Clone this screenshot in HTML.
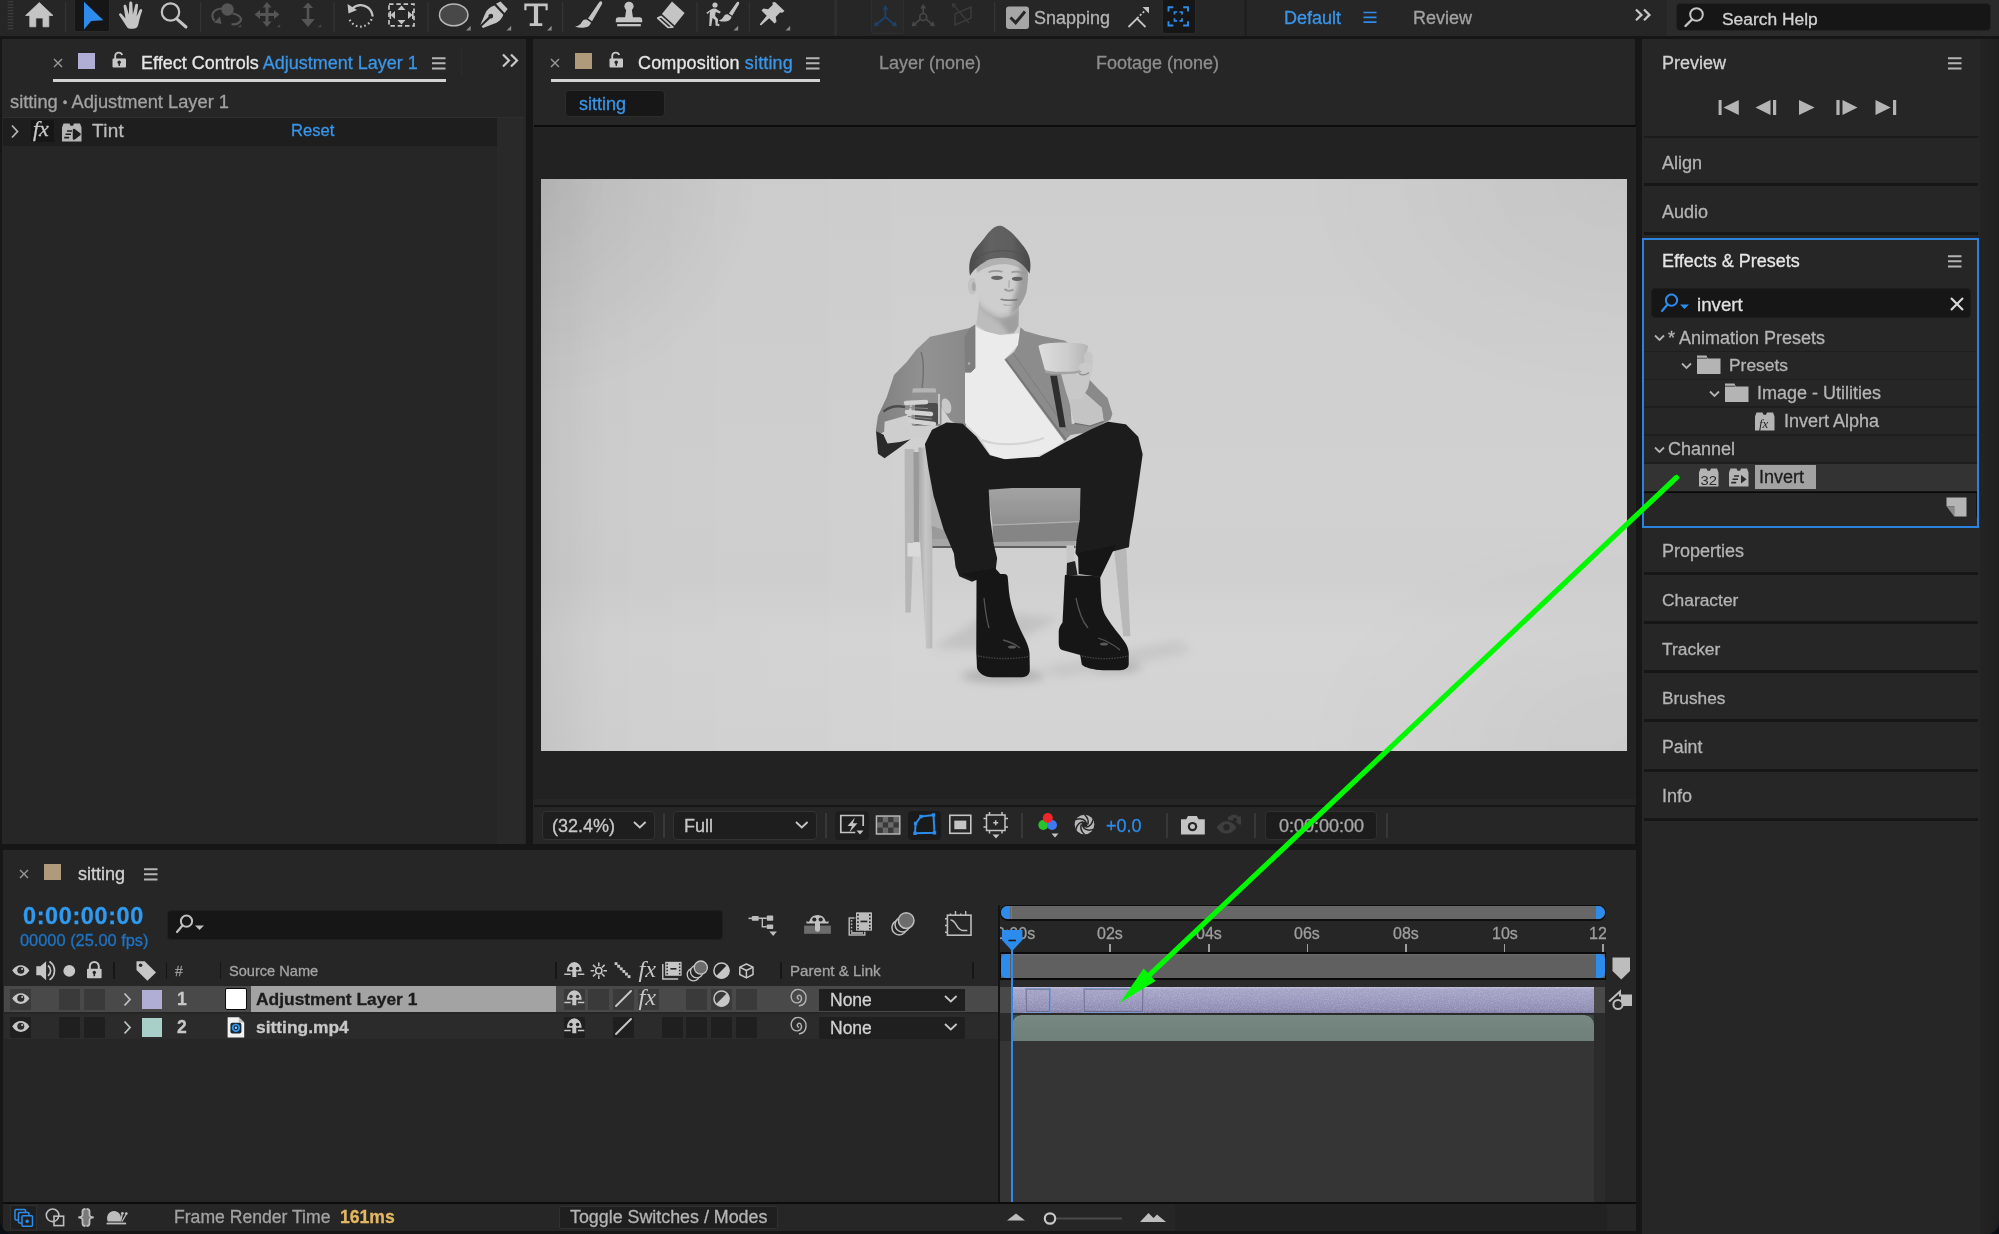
<!DOCTYPE html>
<html>
<head>
<meta charset="utf-8">
<title>After Effects</title>
<style>
*{box-sizing:border-box;margin:0;padding:0}
html,body{width:1999px;height:1234px;overflow:hidden;background:#161616;font-family:"Liberation Sans",sans-serif;}
body{position:relative;color:#b4b4b4;font-size:18px;}
.a{position:absolute;}
.t{-webkit-text-stroke:0.3px currentColor;will-change:transform;position:absolute;white-space:nowrap;line-height:24px;height:24px;font-size:18px;color:#b4b4b4;}
.pn{position:absolute;background:#262626;}
.blue{color:#3a96e8;}
.hl{position:absolute;background:#161616;height:3px;}
svg{position:absolute;overflow:visible;}
.vsep{position:absolute;width:2px;background:#383838;}
</style>
</head>
<body>

<!-- ============ TOP TOOLBAR ============ -->
<div class="pn" id="toolbar" style="left:0;top:0;width:1999px;height:36px;"></div>
<div class="a" style="left:1667px;top:0;width:332px;height:36px;background:#2b2b2b;"></div>
<!--TB-START-->
<div class="a" style="left:73.5px;top:0;width:36.3px;height:32.3px;background:#161616;border-radius:0 0 3px 3px;border:1px solid #2a2a2a;border-top:none;"></div>
<div class="a" style="left:1161.5px;top:0;width:34.5px;height:33.8px;background:#161616;border-radius:0 0 3px 3px;border:1px solid #2a2a2a;border-top:none;"></div>
<div class="a" style="left:870.5px;top:0;width:33.5px;height:33.5px;background:#282828;border-radius:0 0 3px 3px;border:1px solid #2e2e2e;border-top:none;"></div>
<div class="a" style="left:1676px;top:3px;width:315px;height:28px;background:#161616;border-radius:4px;border:1px solid #232323;"></div>
<svg style="left:0;top:0" width="1999" height="40" viewBox="0 0 1999 40">
<!-- grip -->
<g fill="#3c3c3c"><rect x="7.600" y="1" width="5.700" height="1.300"/><rect x="7.600" y="4" width="5.700" height="1.300"/><rect x="7.600" y="7" width="5.700" height="1.300"/><rect x="7.600" y="10" width="5.700" height="1.300"/><rect x="7.600" y="13" width="5.700" height="1.300"/><rect x="7.600" y="16" width="5.700" height="1.300"/><rect x="7.600" y="19" width="5.700" height="1.300"/><rect x="7.600" y="22" width="5.700" height="1.300"/><rect x="7.600" y="25" width="5.700" height="1.300"/><rect x="7.600" y="28" width="5.700" height="1.300"/></g>
<!-- home -->
<path d="M39.300 2.600L53 15.500H48.800V26.800H43V18H35.800V26.800H29.800V15.500H25.600z" fill="#c4c4c4" stroke="#c4c4c4" stroke-width="0.800" stroke-linejoin="round"/>
<g fill="#343434"><rect x="65" y="2" width="1.200" height="30"/><rect x="200" y="2" width="1.200" height="30"/><rect x="333.500" y="2" width="1.200" height="30"/><rect x="427.500" y="2" width="1.200" height="30"/><rect x="562" y="2" width="1.200" height="30"/><rect x="696.300" y="2" width="1.200" height="30"/><rect x="748.700" y="2" width="1.200" height="30"/><rect x="994" y="2" width="1.200" height="30"/></g>
<rect x="834.500" y="0" width="2.400" height="35.500" fill="#303030"/>
<rect x="1244.800" y="0" width="1.600" height="35.500" fill="#1c1c1c"/>
<!-- selection arrow -->
<path d="M84 1.800L103.400 20.300L91.200 21L84 29.500z" fill="#2d8ceb"/>
<!-- hand -->
<g fill="#c4c4c4"><path d="M127.500 27.800c-2.500-3.500-5.300-8.300-8.300-12.600c-.8-1.600 1.200-2.700 2.500-1.200l3.800 4.400l-1.900-11.900c-.3-2 2.300-2.400 2.800-.5l2.500 8.800l.3-11.600c.1-2.100 3-2.100 3.100 0l.6 11.400l2.300-9.700c.5-2 3.200-1.400 2.900.6l-1.500 10.800l3-6.400c.9-1.800 3.200-.7 2.500 1.100c-1.600 4.600-2.800 8.600-3.600 12.700c-.5 2.600-1.700 4.300-3.700 4.700c-3.300.6-6 .6-7.300-.6z"/></g>
<!-- zoom -->
<circle cx="170.500" cy="12" r="8.700" fill="none" stroke="#c4c4c4" stroke-width="2.200"/><path d="M177 19.200L186 27" stroke="#c4c4c4" stroke-width="3" stroke-linecap="round"/>
<!-- orbit (dim) -->
<g fill="#555" stroke="none"><circle cx="227.500" cy="9.500" r="6.200"/><path d="M214 22.500l7.500 1.500-1.500-7.500z"/><path d="M237.500 27.200l3.700-2.800 0 2.800z" fill="#4a4a4a"/></g>
<path d="M222 8.500c-8 .5-12.500 5.500-7.500 12.500M232.500 13.500c8 1.500 11 6 6 9.500c-2 1.200-5 1.500-7 1.200" fill="none" stroke="#555" stroke-width="2.200"/>
<!-- pan (dim) -->
<g fill="#555"><path d="M267 2l4.500 5.500h-3v5.500h5.500v-3l5.500 4.500l-5.500 4.500v-3h-5.500v5.500h3l-4.500 5.500l-4.500-5.500h3v-5.500h-5.500v3l-5.500-4.500l5.500-4.500v3h5.500v-5.500h-3z"/><path d="M276.500 27.200l3.700-2.800 0 2.800z" fill="#4a4a4a"/></g>
<!-- dolly (dim) -->
<g fill="#555"><path d="M308 2.500l5 5.500h-3.700v11h5.500l-6.800 8l-6.800-8h5.500v-11h-3.700z"/><rect x="301" y="6.500" width="14" height="0" /><path d="M317.500 27.200l3.700-2.800 0 2.800z" fill="#4a4a4a"/></g>
<!-- rotate -->
<path d="M352.500 8.500A12 12 0 0 1 372.500 15" fill="none" stroke="#c4c4c4" stroke-width="2.200"/><path d="M347.500 4l1 9.500l8.500-3.500z" fill="#c4c4c4"/>
<path d="M372.500 15a12 12 0 0 1-23.500 3" fill="none" stroke="#c4c4c4" stroke-width="2.200" stroke-dasharray="1.600 2.700"/>
<!-- pan behind -->
<rect x="389" y="4.200" width="25" height="21.600" fill="none" stroke="#c4c4c4" stroke-width="1.700" stroke-dasharray="4.500 2.800"/>
<g fill="#c4c4c4"><path d="M401.500 5.500l4 4.500h-8z"/><path d="M401.500 24.500l4-4.500h-8z"/><path d="M390.500 15l4.500-4v8z"/><path d="M412.500 15l-4.500-4v8z"/><rect x="389.500" y="11" width="1.600" height="8"/><rect x="412" y="11" width="1.600" height="8"/></g>
<!-- ellipse -->
<ellipse cx="453.700" cy="14.900" rx="14.200" ry="10.900" fill="#484848" stroke="#b8b8b8" stroke-width="1.500"/><path d="M466 30.500l4.700-4.700v4.700z" fill="#8a8a8a"/>
<!-- pen -->
<g fill="#c4c4c4"><path d="M496 3.800l4.500-2.300l7.200 7.500l-3.200 4z"/><path d="M494.500 5.500l8.800 9.200c-1.500 4.500-5 7.700-9.500 9l-10.800 4.300l-1.400-1.400l8.600-8.200a2.300 2.300 0 1 0-1.600-1.600l-8.300 8.300l4.700-11.200c1.600-4 5-7 9.500-8.400z"/><path d="M506.500 30.500l4.700-4.700v4.700z" fill="#8a8a8a"/></g>
<!-- T -->
<g fill="#c4c4c4"><path d="M524.300 3.500h23.400v6.700h-2.200v-3.900h-7.400v17h4.200v2.700h-12.600v-2.700h4.200v-17h-7.400v3.900h-2.200z"/><path d="M547 30.500l4.700-4.700v4.700z" fill="#8a8a8a"/></g>
<!-- brush -->
<g fill="#c4c4c4"><path d="M601.500 1.500c.8.500 1 1.500.3 3l-9.800 16.700l-4-2.600l11-16c1-1.400 1.700-1.700 2.500-1.100z"/><path d="M587 19.800l4 2.800c-1 3.800-4.500 5.400-9 5.100c-2.500-.1-4.800-.4-7-1c3.500-.8 5.500-2.400 6.800-4.800c1.300-2.300 3.200-3 5.200-2.100z"/></g>
<!-- stamp -->
<g fill="#c4c4c4"><circle cx="629" cy="6.300" r="4.600"/><path d="M626.300 9h5.400l1.200 8.300h6.600c1.700 0 2.700 1 2.700 2.700v2.200h-26.400v-2.200c0-1.700 1-2.700 2.700-2.700h6.600z"/><rect x="617.200" y="24" width="23.600" height="2.300"/></g>
<!-- eraser -->
<g><path d="M672 1.500l12.600 11.500l-10 12.500l-12.700-11.500z" fill="#c4c4c4"/><path d="M661 16.500l11.800 10.600l-4.600 0.400l-10.500-9.500z" fill="none" stroke="#c4c4c4" stroke-width="1.700" stroke-linejoin="round"/></g>
<!-- roto brush -->
<g fill="#c4c4c4"><circle cx="715" cy="5" r="2.600"/><path d="M711 9.500c1.500-1 3.500-1.200 5.200-.5l4.500 2.700l-.8 1.700l-4.200-1.400l-.6 4l3 3.200l-.5 6.500h-2l-.4-5.600l-2.700-2.200l-1.200 8h-2.100l.7-14.300l-2.200 2.300l-1.400-1.200z"/><path d="M738.500 1.800c.8.500.9 1.400.3 2.600l-6.600 11.400l-3.300-2.200l7.400-10.700c.8-1.200 1.500-1.500 2.200-1.100z"/><path d="M728.200 14.500l3.300 2.300c-.6 3.300-3.600 4.800-7.400 4.800c-2.200 0-4-.4-5.400-1.200c2.500-.7 4-1.900 5-3.900c1-1.900 2.700-2.700 4.500-2z"/><circle cx="718.300" cy="25" r="1.200"/><path d="M733.500 30.500l4.700-4.700v4.700z" fill="#8a8a8a"/></g>
<!-- pin -->
<g fill="#c4c4c4"><path d="M775 2l9.500 9l-2.200 1.800l-2.300-.3l-4.300 4.500l.8 4.700l-2 1.900l-5.300-5.300l-8 7l-1.300-.2l.1-1.100l6.700-8.300l-5.200-5.200l1.900-1.900l4.700.7l4.600-4.300l-.3-2.400z"/><path d="M785.500 30.500l4.700-4.700v4.700z" fill="#8a8a8a"/></g>
<!-- axis icons -->
<g stroke="#1d426c" stroke-width="1.800" fill="#1d426c"><path d="M885.400 17V7.500M885.400 17l-9 7.500M885.400 17l9 7.500" fill="none"/><path d="M885.400 5l3 4.500h-6z" stroke="none"/><path d="M873.800 26.500l1.500-5.200l3.800 4.200z" stroke="none"/><path d="M897 26.500l-1.500-5.200l-3.800 4.200z" stroke="none"/></g>
<g stroke="#484848" stroke-width="1.600" fill="#484848"><circle cx="923.200" cy="17" r="3.500" fill="none"/><path d="M923.200 13.500V7M920.400 19.200l-6 5M926 19.200l6 5" fill="none"/><path d="M923.200 4l3 4.500h-6z" stroke="none"/><path d="M911.600 26.500l1.500-5.200l3.800 4.200z" stroke="none"/><path d="M934.800 26.500l-1.500-5.200l-3.800 4.200z" stroke="none"/></g>
<g stroke="#3a3a3a" stroke-width="1.600" fill="none"><path d="M955 14l16-7v11l-16 7z"/><path d="M953 4.500l16 18.500"/><path d="M951.500 3l5 1l-3.800 3.800z" fill="#3a3a3a" stroke="none"/></g>
<!-- snapping -->
<rect x="1006" y="6.500" width="23" height="22.500" rx="3" fill="#a6a6a6"/><path d="M1010.500 17.500l5.200 5.200l9.300-11.200" fill="none" stroke="#262626" stroke-width="3"/>
<g stroke="#c4c4c4" fill="none"><path d="M1128.500 27l8.500-8.500l8.500 8.500" stroke-width="1.800"/><path d="M1137 18.500l8-8" stroke-width="1.700" stroke-dasharray="2.200 1.800"/></g><path d="M1149 7v6.500l-6.500-6.500z" fill="#c4c4c4"/>
<g stroke="#2d8ceb" stroke-width="1.900" fill="none"><path d="M1168.500 11.500v-4.200h4.800M1183.200 7.300h4.800v4.200M1188 21.300v4.200h-4.800M1173.300 25.500h-4.800v-4.200"/><path d="M1174.500 14.500v-2.500h2.500M1179.500 12h2.500v2.500M1182 18.300v2.500h-2.500M1177 20.800h-2.500v-2.500" stroke-width="1.700"/></g>
<!-- workspace hamburger -->
<path d="M1363.500 12.500h13M1363.500 17.300h13M1363.500 22.100h13" stroke="#2d8ceb" stroke-width="1.700"/>
<!-- >> -->
<path d="M1636 9.500l5.500 5.400-5.500 5.400M1644 9.500l5.500 5.400-5.500 5.400" stroke="#c8c8c8" stroke-width="2.200" fill="none"/>
<!-- search -->
<circle cx="1696.500" cy="14.500" r="6.300" fill="none" stroke="#c4c4c4" stroke-width="2"/><path d="M1692 19.500l-6.500 6.500" stroke="#c4c4c4" stroke-width="2.400" stroke-linecap="round"/>
</svg>
<div class="t" style="left:1034px;top:6px;font-size:18px;color:#b4b4b4;">Snapping</div>
<div class="t" style="left:1283.500px;top:6px;color:#3a96e8;">Default</div>
<div class="t" style="left:1413px;top:6px;color:#a2a2a2;">Review</div>
<div class="t" style="left:1722px;top:7px;color:#d2d2d2;font-size:17.4px;">Search Help</div>
<!--TB-END-->

<!-- ============ LEFT PANEL (Effect Controls) ============ -->
<div class="pn" id="leftpanel" style="left:2px;top:39px;width:524px;height:805px;"></div>
<!--LEFT-START-->
<div class="a" style="left:496.5px;top:117px;width:27.5px;height:727px;background:#292929;"></div>
<div class="a" style="left:3px;top:116.5px;width:521px;height:1px;background:#2e2e2e;"></div>
<svg style="left:53px;top:58px" width="10" height="10"><path d="M1 1l8 8M9 1L1 9" stroke="#9a9a9a" stroke-width="1.4"/></svg>
<div class="a" style="left:77.5px;top:52.5px;width:17.5px;height:16.5px;background:#b1aed5;"></div>
<svg style="left:112px;top:51px" width="15" height="17"><path d="M3.2 8V5.2a3.6 3.6 0 0 1 7-1.2" stroke="#c8c8c8" stroke-width="1.8" fill="none"/><rect x="0.5" y="7.6" width="13.5" height="8.8" rx="1" fill="#c8c8c8"/><circle cx="7.2" cy="11.2" r="1.7" fill="#262626"/><rect x="6.5" y="11.5" width="1.5" height="3.4" fill="#262626"/></svg>
<div class="t" style="left:140.5px;top:50.5px;color:#e6e6e6;">Effect Controls <span class="blue">Adjustment Layer 1</span></div>
<svg style="left:432px;top:57px" width="14" height="13"><path d="M0 1.2h13.5M0 6.3h13.5M0 11.4h13.5" stroke="#b4b4b4" stroke-width="2" fill="none"/></svg>
<div class="a" style="left:53px;top:79px;width:392.5px;height:3px;background:#d2d2d2;"></div>
<div class="a" style="left:460.5px;top:46px;width:1.5px;height:30px;background:#2c2c2c;"></div>
<svg style="left:501px;top:53px" width="18" height="15"><path d="M2 1.5l6 6-6 6M10 1.5l6 6-6 6" stroke="#c8c8c8" stroke-width="2.2" fill="none"/></svg>
<div class="t" style="left:9.5px;top:90px;color:#a2a2a2;font-size:18.3px;">sitting <span style="font-size:13px;position:relative;top:-1px">•</span> Adjustment Layer 1</div>
<div class="a" style="left:3px;top:118px;width:493.5px;height:27.5px;background:#1e1e1e;"></div>
<svg style="left:10px;top:124px" width="10" height="15"><path d="M2 1.5l5.5 6-5.5 6" stroke="#b4b4b4" stroke-width="1.8" fill="none"/></svg>
<div class="a" style="left:31px;top:120px;width:22.5px;height:22px;background:#161616;"></div>
<div class="t" style="left:33px;top:117px;font-family:'Liberation Serif',serif;font-style:italic;font-size:22px;color:#c8c8c8;">fx</div>
<svg style="left:62px;top:122.5px" width="20" height="19"><path d="M0 4.5l1.5-4h6l1 2.2h2.5l1-2.2h6l1.5 4V18.5H0z" fill="#b4b4b4"/><path d="M5 8h5M3.5 11.3h5.5M2.2 14.6h5" stroke="#1e1e1e" stroke-width="1.6"/><path d="M12 7l5.5 4.2L12 15.5z" fill="#1e1e1e" stroke="#1e1e1e" stroke-width="2.5" stroke-linejoin="round"/></svg>
<div class="t" style="left:92px;top:119px;color:#bcbcbc;font-size:19px;letter-spacing:0.3px;">Tint</div>
<div class="t blue" style="left:290.5px;top:119px;font-size:16.6px;">Reset</div>
<!--LEFT-END-->

<!-- ============ COMPOSITION PANEL ============ -->
<div class="pn" id="comppanel" style="left:532.7px;top:39px;width:1102.8px;height:805px;"></div>
<!--COMP-START-->
<!-- tab row -->
<svg style="left:550px;top:58px" width="10" height="10"><path d="M1 1l8 8M9 1L1 9" stroke="#9a9a9a" stroke-width="1.4"/></svg>
<div class="a" style="left:575px;top:52.5px;width:17px;height:16.5px;background:#af9b7c;"></div>
<svg style="left:609px;top:51px" width="15" height="17"><path d="M3.2 8V5.2a3.6 3.6 0 0 1 7-1.2" stroke="#c8c8c8" stroke-width="1.8" fill="none"/><rect x="0.5" y="7.6" width="13.5" height="8.8" rx="1" fill="#c8c8c8"/><circle cx="7.2" cy="11.2" r="1.7" fill="#262626"/><rect x="6.5" y="11.5" width="1.5" height="3.4" fill="#262626"/></svg>
<div class="t" style="left:637.5px;top:50.5px;color:#e6e6e6;letter-spacing:0.15px;">Composition <span class="blue">sitting</span></div>
<svg style="left:806px;top:57px" width="14" height="13"><path d="M0 1.2h13.5M0 6.3h13.5M0 11.4h13.5" stroke="#b4b4b4" stroke-width="2" fill="none"/></svg>
<div class="a" style="left:550.5px;top:79px;width:269px;height:3px;background:#d2d2d2;"></div>
<div class="t" style="left:878.5px;top:50.5px;color:#8e8e8e;">Layer (none)</div>
<div class="t" style="left:1096px;top:50.5px;color:#8e8e8e;">Footage (none)</div>
<div class="a" style="left:564.5px;top:89.5px;width:100px;height:27px;background:#171717;border:1px solid #2c2c2c;border-radius:4px;"></div>
<div class="t blue" style="left:578.5px;top:91.5px;">sitting</div>
<div class="a" style="left:534px;top:124.6px;width:1101.5px;height:2.2px;background:#0c0c0c;"></div>
<!-- viewer -->
<div class="a" style="left:533px;top:126.8px;width:1102.5px;height:678.5px;background:#222222;"></div>
<div class="a" style="left:533px;top:799px;width:1102.5px;height:6.5px;background:#252525;"></div>
<div class="a" style="left:534px;top:805.3px;width:1101.5px;height:2.2px;background:#161616;"></div>
<div class="a" id="photo" style="left:541px;top:178.5px;width:1086.3px;height:572.2px;background:#d6d6d6;overflow:hidden;">
<!--PH-START-->
<div class="a" style="left:0;top:0;width:100%;height:100%;background:radial-gradient(ellipse 20% 38% at 0% 0%, rgba(0,0,0,0.075), rgba(0,0,0,0) 100%),radial-gradient(ellipse 30% 40% at 100% 0%, rgba(0,0,0,0.045), rgba(0,0,0,0) 100%),radial-gradient(ellipse 30% 40% at 100% 100%, rgba(0,0,0,0.04), rgba(0,0,0,0) 100%),linear-gradient(90deg, rgba(0,0,0,0.07) 0%, rgba(0,0,0,0.025) 6%, rgba(0,0,0,0.012) 18%, rgba(0,0,0,0) 35%),linear-gradient(180deg, #cecece 0%, #d1d1d1 55%, #d0d0d0 70%, #d5d5d5 80%, #d3d3d3 100%);"></div>
<svg style="left:-541px;top:-178.500px" width="1999" height="1234" viewBox="0 0 1999 1234">
<defs>
<filter id="b1" x="-5%" y="-5%" width="110%" height="110%"><feGaussianBlur stdDeviation="0.75"/></filter>
<filter id="b6" x="-30%" y="-60%" width="160%" height="220%"><feGaussianBlur stdDeviation="5"/></filter>
<filter id="b2" x="-30%" y="-30%" width="160%" height="160%"><feGaussianBlur stdDeviation="2"/></filter>
<filter id="b08" x="-30%" y="-60%" width="160%" height="220%"><feGaussianBlur stdDeviation="0.7"/></filter>
<clipPath id="cpFace"><path d="M974.200 270C975 280 976.500 290 977.900 294.300C978.500 300 979.500 304.800 983 308.500C987 312.500 994 317 1001.600 317.400C1008 317.200 1014 312.500 1018 308C1022 303 1025 297 1026.400 292.200C1027.500 286 1028.200 280 1028 274.200L1026.900 266L1020.600 260L1010 257.500L997.400 257L986.900 259.500L977.400 265z"/></clipPath>
<clipPath id="cpNeck"><path d="M979.500 298L976.300 324.800L985 331L1000 335L1014 333L1018.500 325.900L1019 303z"/></clipPath>
<linearGradient id="gBeanie" x1="0" x2="1" y1="0" y2="0"><stop offset="0" stop-color="#4a4a4a"/><stop offset="0.35" stop-color="#626262"/><stop offset="0.7" stop-color="#5e5e5e"/><stop offset="1" stop-color="#484848"/></linearGradient>
<linearGradient id="gSeat" x1="0" x2="0" y1="0" y2="1"><stop offset="0" stop-color="#a4a4a4"/><stop offset="1" stop-color="#8e8e8e"/></linearGradient>
<linearGradient id="gBowl" x1="0" x2="1" y1="0" y2="0"><stop offset="0" stop-color="#dddddd"/><stop offset="0.6" stop-color="#cccccc"/><stop offset="1" stop-color="#b4b4b4"/></linearGradient>
<linearGradient id="gJk" x1="0" x2="1" y1="0" y2="0"><stop offset="0" stop-color="#808080"/><stop offset="0.5" stop-color="#929292"/><stop offset="1" stop-color="#888888"/></linearGradient>
<linearGradient id="gLeg" x1="0" x2="1" y1="0" y2="0"><stop offset="0" stop-color="#a6a6a6"/><stop offset="0.5" stop-color="#c6c6c6"/><stop offset="1" stop-color="#b8b8b8"/></linearGradient>
</defs>
<!-- floor shadows -->
<g filter="url(#b6)" opacity="0.55">
 <ellipse cx="1003" cy="676" rx="42" ry="6" fill="#8a8a8a"/>
 <ellipse cx="1098" cy="667" rx="44" ry="6" fill="#8a8a8a"/>
 <path d="M932 648L990 612L1060 618L1000 650z" fill="#b4b4b4"/>
 <path d="M1040 668L1180 640L1190 652L1060 678z" fill="#bcbcbc"/>
</g>
<g filter="url(#b1)">
<!-- chair back / left posts -->
<path d="M904.600 449h9.600l-1.100 96l-2.300 67.400h-5.400l-.500-67.400z" fill="#b6b6b6"/>
<path d="M913.500 452h6v90h-6z" fill="#9a9a9a"/>
<rect x="907.500" y="543" width="14.500" height="13.500" fill="#dadada"/>
<path d="M928.700 458L934.700 495.300L944.900 529.300L951 546L932 546L929 500z" fill="#b0b0b0"/>
<path d="M930 525l16 6l5 15h-19z" fill="#9a9a9a"/>
<path d="M918.500 447.600h10.200l3.700 97.400v103.600h-6.200l-5.900-103.600z" fill="url(#gLeg)"/>
<!-- seat rail & right legs -->
<rect x="932.400" y="539" width="143.200" height="7" fill="#a6a6a6"/>
<rect x="932.400" y="546" width="143.200" height="2" fill="#5e5e5e"/>
<path d="M1066.400 545.400h7.600v18.500h-7.600z" fill="#c8c8c8"/>
<path d="M1114 549h12.400l3.900 87.300h-7z" fill="#b8b8b8"/>
<!-- seat -->
<path d="M987.400 486.800h94.400l-2.500 34.900l-86.800 3.400z" fill="url(#gSeat)"/>
<path d="M992.500 525.100l86.800-3.400l-1.300 19.300l-85 1z" fill="#858585"/>
<path d="M992.500 525.100l86.800-3.400" stroke="#b0b0b0" stroke-width="1.200" fill="none"/>

<!-- jacket left -->
<path d="M975.300 324.400L970 328L930 336.800L916 350L906.700 362L894 375L886.800 396.900L878 415.800L875.800 430.400L880 434L905.200 420L912 402L936 398L950 420L961.900 428L966 426L965 372.500L970.900 372.500L975.300 368z" fill="url(#gJk)"/>
<path d="M921 352c3 8 3 20 1 36" stroke="#707070" stroke-width="1.400" fill="none" filter="url(#b08)"/>
<path d="M883.500 411.500C890 406.500 898 405.300 905 407.200" stroke="#4c4c4c" stroke-width="2.300" fill="none" filter="url(#b08)"/>
<!-- sleeve interior dark -->
<path d="M876 431L878 453.800L884.600 458.200L901 446.500L912 438L886 436z" fill="#2a2a2a"/>
<!-- left forearm/hand -->
<path d="M884.600 421.700L907.900 415L912 399L940 397L942 430L926 438L913.800 438.500L900 442L887.500 443.500L884 436z" fill="#cecece"/>
<!-- jar -->
<rect x="912.500" y="388.300" width="23.500" height="5.500" rx="1.500" fill="#b4b4b4"/>
<rect x="911.500" y="392.500" width="30" height="33.500" rx="3" fill="#909090"/>
<rect x="915" y="403" width="23" height="22" rx="2" fill="#4e4e4e"/>
<path d="M939 394v30" stroke="#d8d8d8" stroke-width="1.500"/>
<ellipse cx="946.500" cy="406" rx="4.500" ry="7.800" transform="rotate(-18 946.500 406)" fill="#c8c8c8"/>
<path d="M906 403l20-1M907 412l24 2M910 421l24 3" stroke="#d2d2d2" stroke-width="4.500" stroke-linecap="round"/>
<path d="M906 407.500l22 1M908 416.500l24 2.500" stroke="#8a8a8a" stroke-width="1"/>

<!-- t-shirt -->
<path d="M975.300 324.400L976.300 327C985 333 1005 337 1018.500 333L1020.500 336L1018 345L1004.400 359.400L1064.300 441.100L1054 448.400L1035.100 457.100L1005.900 462L991.300 456L979.600 437L965 423L965 372.500L970.900 372.500L975.300 368z" fill="#ebebeb"/>
<path d="M982 440c15 6 40 6 62-2" stroke="#d4d4d4" stroke-width="2" fill="none"/>
<!-- jacket right -->
<path d="M1020.500 327.300L1024.800 331.100L1042.400 336L1064.300 340.400L1074 346L1064 372L1070 400L1072 428L1070.600 435.100L1064.300 441.100L1004.400 359.400L1014 352L1018 345z" fill="#8c8c8c"/>
<path d="M1006 359.500L1066 440" stroke="#747474" stroke-width="1.500" fill="none"/>
<path d="M1013 353L1068 431" stroke="#7c7c7c" stroke-width="1" fill="none"/>
<path d="M1050.200 375.700L1057 375.700L1065.700 427.300L1059.500 427.300z" fill="#2e2e2e"/>
<!-- right sleeve + forearm -->
<path d="M1086 376L1097.800 388.400L1107.500 398.100L1112.400 413.700L1110.500 419.500L1104 423L1087.600 432.300L1070.600 435.100L1066.700 423.400L1075 424L1103.700 421.400L1101.700 407.800L1084.200 392.300z" fill="#8a8a8a"/>
<path d="M1068.600 400L1082.300 398L1084.200 392.300L1101.700 407.800L1103.700 421.400L1090 426L1074.500 423.400z" fill="#c4c4c4"/>
<path d="M1074.500 423.400L1090 426L1103.700 421.400" stroke="#6e6e6e" stroke-width="1.200" fill="none"/>
<!-- lapel left band -->
<path d="M975.300 324.400L975.300 368L970.900 372.500L965 372.500L964.500 337L970 328z" fill="#7e7e7e"/>
<circle cx="969" cy="363.500" r="1.200" fill="#b0b0b0"/>

<!-- neck -->
<path d="M979.500 298L976.300 324.800L985 331L1000 335L1014 333L1018.500 325.900L1019 303z" fill="#bcbcbc"/>
<g clip-path="url(#cpNeck)"><path d="M978 300L990 314L1001.600 319L1014 314L1021 302L1020 330L1010 336L1000 322L985 312z" fill="#9a9a9a" filter="url(#b2)" opacity="0.85"/></g>
<!-- face -->
<ellipse cx="972.500" cy="286" rx="4.600" ry="8.600" fill="#c2c2c2"/>
<ellipse cx="973.800" cy="286.500" rx="1.800" ry="4.500" fill="#a8a8a8" filter="url(#b08)"/>
<path id="facePath" d="M974.200 270C975 280 976.500 290 977.900 294.300C978.500 300 979.500 304.800 983 308.500C987 312.500 994 317 1001.600 317.400C1008 317.200 1014 312.500 1018 308C1022 303 1025 297 1026.400 292.200C1027.500 286 1028.200 280 1028 274.200L1026.900 266L1020.600 260L1010 257.500L997.400 257L986.900 259.500L977.400 265z" fill="#cecece"/>
<g clip-path="url(#cpFace)">
 <path d="M1022 258L1032 272L1030 296L1022 310L1010 320L1013 300L1017 288L1019 272z" fill="#8e8e8e" filter="url(#b2)" opacity="0.75"/>
 <path d="M976 296L984 308L1000 316L1016 312L1002 322L982 316z" fill="#a8a8a8" filter="url(#b2)" opacity="0.6"/>
 <ellipse cx="997" cy="277.800" rx="6" ry="2.100" fill="#666" filter="url(#b08)"/>
 <ellipse cx="1017.200" cy="278.800" rx="5.300" ry="2.100" fill="#626262" filter="url(#b08)"/>
 <path d="M988.500 272.300c4-1.600 9-1.800 14-.5M1011.500 272.200c4-1 9-.5 13.500 1.300" stroke="#9a9a9a" stroke-width="1.600" fill="none" filter="url(#b08)"/>
 <path d="M1004.500 289c2 2.200 6.500 2.400 9 .3" stroke="#9c9c9c" stroke-width="2.200" fill="none" filter="url(#b08)"/>
 <path d="M1009.500 280l-1 8" stroke="#b6b6b6" stroke-width="2" fill="none" filter="url(#b08)"/>
 <path d="M1000.600 299.300c5 1.300 11 1.300 16.800.4" stroke="#7c7c7c" stroke-width="1.700" fill="none" filter="url(#b08)"/>
 <path d="M1003.500 304.500c3.500 1.200 7.500 1.200 11 0" stroke="#b0b0b0" stroke-width="1.600" fill="none" filter="url(#b08)"/>
 <path d="M976 266c8-6 20-9 32-8.500c8 .5 16 4 21 10l-2 6c-6-6-14-9-22-9.500c-10 0-20 3-28 9z" fill="#9a9a9a" opacity="0.55" filter="url(#b08)"/>
</g>
<!-- beanie -->
<path d="M970 275.800C968.700 269 969 262 971.500 256C974 249.500 979.500 244 984 238.500C988 233 992 228.500 995.500 226.800C998 225.300 1001.500 225.300 1004 227C1008 229.500 1011 232 1014 235C1018.500 240 1023.500 245.500 1027 251.500C1030.700 258 1031.300 266 1029.500 273.500C1023 263 1016 259.500 1010 258.500C1003 257 993 258 986.900 260.600C977.400 266.500 973 270.500 970 275.800z" fill="url(#gBeanie)"/>
<path d="M972.500 262c9-11 33-16.500 56-5" stroke="#4e4e4e" stroke-width="1.200" fill="none" opacity="0.600"/>

<!-- bowl + hand -->
<path d="M1061 374L1066 392L1068.600 400L1082.300 398L1088 388L1091 375L1093 363L1091.500 353L1086 351.500L1083.500 356L1084 368L1080 372z" fill="#c8c8c8"/>
<path d="M1038.500 346.500C1038.500 341.300 1088.100 341 1088.100 346.500L1082.300 370.500C1082 374.300 1046 374.800 1045.300 371.500z" fill="url(#gBowl)"/>
<path d="M1044.800 369.300C1046 373 1082 372.500 1082.600 369L1082.300 371C1082 374.800 1046 375.300 1045.300 372z" fill="#a2a2a2"/>
<ellipse cx="1088.300" cy="357.300" rx="4.300" ry="6" fill="#c6c6c6"/>
<ellipse cx="1085" cy="367.500" rx="6.200" ry="4.800" fill="#cacaca"/>
<path d="M1079 373.500c3 2 7 1.500 10-1" stroke="#8e8e8e" stroke-width="1.200" fill="none"/>

<!-- pants -->
<path d="M1004.400 460.400L1040.200 457.900L1067.400 442.500L1091.200 430.600L1108.200 423L1125.200 425.500L1137.100 437.400L1141.400 454.400L1137.100 485.100L1132 519.100L1128.600 537.800L1127.800 546.300L1108.200 551.400L1079.300 556.500L1076.700 553.100L1077.600 541.200L1081 519.100L1081.800 486.800L1009.500 486.800L1000 470z" fill="#1e1e1e" stroke="#1e1e1e" stroke-width="2.5" stroke-linejoin="round"/>
<path d="M926.200 444.200L933 430.600L946.600 423.800L961.900 424.700L975.500 437.400L989.100 456.200L1004.400 460.400L1012 486.800L987.400 488.500L989.100 519.100L992.500 544.600L995.900 558.200L994.200 571.900L972 580.400L960.200 575.300L956.800 566.800L955.100 553.100L944.900 529.300L934.700 495.300L929.600 468.100z" fill="#1e1e1e" stroke="#1e1e1e" stroke-width="2.5" stroke-linejoin="round"/>
<!-- socks -->
<path d="M960 574L995 568L1003 577L977 580z" fill="#161616"/>
<path d="M1078 553L1116 545L1100.500 577L1078.700 574z" fill="#161616"/>
<path d="M1067 563l8-2l2.500 14l-11 1z" fill="#222"/>
<!-- boots -->
<path d="M976.500 577C977 575 979 574 982 574L1004 574C1006.500 574 1007.800 575.500 1007.800 578L1009 592C1010 600 1011.500 606 1013.500 612C1016 620 1019.500 628 1023.500 636C1026.500 642 1029 647 1029.500 653L1029.800 670C1029.800 674 1027 677 1022 677.300L992 677.300C984 677 978.500 673 977 668L976.300 652z" fill="#161616"/>
<path d="M1064.800 577L1065 575L1100.200 576.200L1101 596C1101.500 606 1103 612 1107 618C1112 626 1119 634 1124 641C1127 645 1128.500 649 1128.700 653L1128.700 664C1128.700 668 1125 670 1120 670.300L1103.300 670.300C1094 670 1084 667.500 1081.800 664.500L1080.200 655L1062 650C1059.500 649 1058.700 646 1058.700 642L1058.700 632C1058.700 628 1060.500 625 1062.500 622.400z" fill="#161616"/>
<g filter="url(#b08)" opacity="0.75" fill="none" stroke="#6a6a6a" stroke-width="1.300">
<path d="M984 598c1 10 2 20 5 30"/><path d="M1003 640c6 1.500 12 4 17 8"/><path d="M978 656c14 3 36 3.500 51 .5" stroke="#585858" stroke-dasharray="1.500 1.200"/>
<path d="M1076 598c2 10 5 22 12 30"/><path d="M1098 638c8 2.500 16 7 22 12"/><path d="M1082 656c14 3.500 32 3.500 46 0" stroke="#585858" stroke-dasharray="1.500 1.200"/>
</g>
<ellipse cx="1012" cy="647" rx="4" ry="1.600" fill="#777" filter="url(#b08)" opacity="0.7"/>
<ellipse cx="1104" cy="644" rx="4" ry="1.600" fill="#777" filter="url(#b08)" opacity="0.7"/>
</g>
</svg>
<!--PH-END-->
</div>
<!-- footer -->
<div class="a" style="left:542px;top:810.5px;width:112.5px;height:29px;background:#1e1e1e;border:1px solid #333;border-radius:4px;"></div>
<div class="t" style="left:552px;top:813.5px;color:#c8c8c8;">(32.4%)</div>
<svg style="left:633px;top:820px" width="14" height="10"><path d="M1 2l5.8 5.5L12.6 2" stroke="#c8c8c8" stroke-width="1.8" fill="none"/></svg>
<div class="vsep" style="left:662.5px;top:813px;height:25px;"></div>
<div class="a" style="left:673px;top:810.5px;width:143.5px;height:29px;background:#1e1e1e;border:1px solid #333;border-radius:4px;"></div>
<div class="t" style="left:683.5px;top:813.5px;color:#c8c8c8;">Full</div>
<svg style="left:795px;top:820px" width="14" height="10"><path d="M1 2l5.8 5.5L12.6 2" stroke="#c8c8c8" stroke-width="1.8" fill="none"/></svg>
<div class="vsep" style="left:824.5px;top:813px;height:25px;"></div>
<!--FT-START-->
<div class="a" style="left:834.5px;top:810.5px;width:34.5px;height:29px;background:#1e1e1e;border-radius:4px;"></div>
<div class="a" style="left:907.5px;top:810.5px;width:33px;height:29px;background:#1a1a1a;border-radius:4px;"></div>
<svg style="left:0;top:795px" width="1999" height="60" viewBox="0 795 1999 60">
<!-- fast preview -->
<g fill="none" stroke="#c4c4c4" stroke-width="1.700"><path d="M863.200 826v-10.500h-22.400v17h14.500"/></g>
<path d="M855 817.500l-7.500 8.500h4.500l-2.700 6.500l8.200-9.300h-4.600z" fill="#c4c4c4"/><path d="M856.500 830.500h7l-3.500 4z" fill="#c4c4c4"/>
<!-- transparency grid -->
<rect x="876.400" y="816" width="23.400" height="18" fill="#6a6a6a" stroke="#b8b8b8" stroke-width="1.400"/>
<g fill="#3a3a3a"><rect x="877.500" y="817" width="5.300" height="5.300"/><rect x="888.100" y="817" width="5.300" height="5.300"/><rect x="882.800" y="822.300" width="5.300" height="5.300"/><rect x="893.400" y="822.300" width="5.300" height="5.300"/><rect x="877.500" y="827.600" width="5.300" height="5.300"/><rect x="888.100" y="827.600" width="5.300" height="5.300"/></g>
<!-- mask toggle (blue) -->
<g fill="none" stroke="#2d8ceb" stroke-width="2"><path d="M921 816.500l12.500-1.500l1 17.800l-19.500.5l.6-9.800z"/></g><g fill="#2d8ceb"><rect x="919.300" y="814.800" width="3.400" height="3.400"/><rect x="931.800" y="813.300" width="3.400" height="3.400"/><rect x="932.800" y="831.100" width="3.400" height="3.400"/><rect x="913.300" y="831.600" width="3.400" height="3.400"/><rect x="913.900" y="821.800" width="3.400" height="3.400"/></g>
<!-- ROI -->
<rect x="949.800" y="815.300" width="21" height="18" fill="none" stroke="#c4c4c4" stroke-width="1.600"/><rect x="954.300" y="820.600" width="12" height="8.600" fill="#c4c4c4"/>
<!-- grid / guides -->
<g fill="none" stroke="#c4c4c4" stroke-width="1.500"><rect x="986.500" y="815" width="18.500" height="15.500"/><path d="M989.500 812v3M1002 812v3M983.500 818.500h3M983.500 827h3M1005 818.500h3M1005 827h3M989.500 830.500v3M1002 830.500v3M995.700 820.200v5M993.200 822.700h5"/></g><path d="M992.500 834.500h7l-3.500 4z" fill="#c4c4c4"/>
<!-- RGB -->
<circle cx="1043.300" cy="825" r="5" fill="#25c42b"/><circle cx="1052" cy="825" r="5" fill="#3f79f2"/><circle cx="1047.800" cy="818" r="5" fill="#f0262a"/><path d="M1051.500 833.500h7l-3.500 4z" fill="#c4c4c4"/>
<!-- aperture -->
<g><circle cx="1084.500" cy="824.500" r="9.800" fill="#b8b8b8"/><g stroke="#262626" stroke-width="1.500" fill="none"><path d="M1084.500 814.700c3.500 3 4.500 6 3.200 9.800"/><path d="M1093 819.600c-.8 4.500-3 7-6.900 7.700"/><path d="M1093 829.400c-4.300 1.500-7.500.8-10.100-2.100"/><path d="M1084.500 834.300c-3.500-3-4.500-6-3.200-9.800"/><path d="M1076 829.400c.8-4.500 3-7 6.900-7.700"/><path d="M1076 819.600c4.300-1.500 7.500-.8 10.100 2.100"/></g><circle cx="1084.500" cy="824.500" r="3" fill="#262626"/></g>
<!-- camera -->
<g><path d="M1181 819.300h5.200l1.800-3.300h8.800l1.800 3.300h6.200v15.200H1181z" fill="#c4c4c4"/><circle cx="1192.500" cy="826.600" r="4.700" fill="#262626"/><circle cx="1192.500" cy="826.600" r="2.500" fill="#c4c4c4"/></g>
<!-- show snapshot (dim) -->
<g fill="#3e3e3e"><path d="M1216.500 827.500c3-4.300 6.300-6.200 10-6.200s7 1.900 10 6.200c-3 4.300-6.300 6.200-10 6.200s-7-1.900-10-6.200z"/><path d="M1228 816.500h2.500l1-1.800h5l1 1.800h3.500v8h-2c-2-2.500-5-4.200-9-4.300h-2z"/></g><circle cx="1226.500" cy="827.300" r="3.200" fill="#262626"/><circle cx="1235" cy="819.800" r="2" fill="#262626"/>
</svg>
<!--FT-END-->
<div class="vsep" style="left:1021px;top:813px;height:25px;"></div>
<div class="t blue" style="left:1105.5px;top:813.5px;color:#2d8ceb;">+0.0</div>
<div class="vsep" style="left:1166px;top:813px;height:25px;"></div>
<div class="vsep" style="left:1254px;top:813px;height:25px;"></div>
<div class="a" style="left:1264.5px;top:810.5px;width:112px;height:29px;background:#1c1c1c;border:1px solid #303030;border-radius:4px;"></div>
<div class="t" style="left:1278.5px;top:813.5px;color:#a8a8a8;">0:00:00:00</div>
<div class="vsep" style="left:1385.5px;top:813px;height:25px;"></div>
<!--COMP-END-->

<!-- ============ RIGHT PANEL ============ -->
<div class="pn" id="rightpanel" style="left:1642px;top:39px;width:357px;height:1195px;"></div>
<!--RIGHT-START-->
<div class="a" style="left:1980.4px;top:39px;width:18.6px;height:1195px;background:linear-gradient(90deg,#232323,#1f1f1f);"></div>
<svg style="left:1987px;top:1222px" width="12" height="12"><path d="M12 0v12H0A12 12 0 0 0 12 0z" fill="#0b0e14"/></svg>
<div class="t" style="left:1662px;top:50.5px;color:#d2d2d2;">Preview</div>
<svg style="left:1948px;top:57px" width="14" height="13"><path d="M0 1.2h13.5M0 6.3h13.5M0 11.4h13.5" stroke="#b4b4b4" stroke-width="2" fill="none"/></svg>
<!-- transport -->
<svg style="left:1718px;top:99px" width="180" height="17" fill="#b4b4b4">
 <rect x="0.6" y="1" width="3" height="15"/><path d="M20.8 1v15L5.5 8.5z"/>
 <path d="M37.5 8.5L52.5 1v15z"/><rect x="55" y="1" width="3.2" height="15"/>
 <path d="M81 1l15.6 7.5L81 16z"/>
 <rect x="118.4" y="1" width="3.2" height="15"/><path d="M124.5 1l15 7.5-15 7.5z"/>
 <path d="M157.5 1l15.2 7.5-15.2 7.5z"/><rect x="175" y="1" width="3.2" height="15"/>
</svg>
<div class="a" style="left:1644px;top:135.7px;width:334px;height:2.3px;background:#1b1b1b;"></div>
<div class="t" style="left:1662px;top:150.5px;">Align</div>
<div class="hl" style="left:1644px;top:182.5px;width:334px;"></div>
<div class="t" style="left:1662px;top:199.5px;">Audio</div>
<div class="hl" style="left:1644px;top:232.3px;width:334px;"></div>

<!-- Effects & Presets -->
<div class="a" style="left:1642px;top:237.5px;width:337px;height:290px;border:2px solid #2c82df;"></div>
<div class="t" style="left:1662px;top:248.5px;color:#e6e6e6;">Effects &amp; Presets</div>
<svg style="left:1948px;top:255px" width="14" height="13"><path d="M0 1.2h13.5M0 6.3h13.5M0 11.4h13.5" stroke="#b4b4b4" stroke-width="2" fill="none"/></svg>
<div class="a" style="left:1651px;top:287.8px;width:319.5px;height:30.6px;background:#161616;border-radius:4.5px;border:1px solid #1c1c1c;"></div>
<svg style="left:1661px;top:293px" width="32" height="20"><circle cx="10.5" cy="7.2" r="5.6" fill="none" stroke="#2d8ceb" stroke-width="2"/><path d="M6.5 11.5L1 18" stroke="#2d8ceb" stroke-width="2.2" stroke-linecap="round"/><path d="M19 11.5h9l-4.5 4.5z" fill="#2d8ceb"/></svg>
<div class="t" style="left:1697px;top:292.5px;color:#e0e0e0;font-size:18.7px;">invert</div>
<svg style="left:1950px;top:297px" width="14" height="14"><path d="M1 1l12 12M13 1L1 13" stroke="#d8d8d8" stroke-width="2.2"/></svg>

<!-- tree rows -->
<div class="a" style="left:1644px;top:350.8px;width:333px;height:1.4px;background:#1e1e1e;"></div>
<div class="a" style="left:1644px;top:378.6px;width:333px;height:1.4px;background:#1e1e1e;"></div>
<div class="a" style="left:1644px;top:406.4px;width:333px;height:1.4px;background:#1e1e1e;"></div>
<div class="a" style="left:1644px;top:434.2px;width:333px;height:1.4px;background:#1e1e1e;"></div>
<div class="a" style="left:1644px;top:462.2px;width:333px;height:1.4px;background:#1e1e1e;"></div>
<div class="a" style="left:1644px;top:463.8px;width:333px;height:26.8px;background:#333333;"></div>
<div class="a" style="left:1644px;top:490.6px;width:333px;height:2.6px;background:linear-gradient(#1c1c1c,#000);"></div>
<div class="a" style="left:1975.5px;top:493px;width:1.5px;height:24px;background:#141414;"></div>

<svg style="left:1653px;top:332px" width="14" height="12"><path d="M2 3.5l4.5 4.5 4.5-4.5" stroke="#b4b4b4" stroke-width="1.8" fill="none"/></svg>
<div class="t" style="left:1668px;top:325.5px;">* Animation Presets</div>

<svg style="left:1680px;top:360px" width="14" height="12"><path d="M2 3.5l4.5 4.5 4.5-4.5" stroke="#b4b4b4" stroke-width="1.8" fill="none"/></svg>
<svg style="left:1697px;top:355px" width="24" height="20"><path d="M0 0.5h9.5l1.2 3H23.5v15.5H0z" fill="#b4b4b4"/><path d="M0 3.2h10" stroke="#262626" stroke-width="0.8"/></svg>
<div class="t" style="left:1728.5px;top:353.3px;font-size:17.4px;">Presets</div>

<svg style="left:1708px;top:388px" width="14" height="12"><path d="M2 3.5l4.5 4.5 4.5-4.5" stroke="#b4b4b4" stroke-width="1.8" fill="none"/></svg>
<svg style="left:1725px;top:383px" width="24" height="20"><path d="M0 0.5h9.5l1.2 3H23.5v15.5H0z" fill="#b4b4b4"/><path d="M0 3.2h10" stroke="#262626" stroke-width="0.8"/></svg>
<div class="t" style="left:1756.5px;top:381px;">Image - Utilities</div>

<svg style="left:1755px;top:412px;will-change:transform" width="20" height="19"><path d="M0 4.5l1.5-4h6l1 2.2h2.5l1-2.2h6l1.5 4V18.5H0z" fill="#b4b4b4"/><text x="4" y="15.5" font-family="Liberation Serif" font-style="italic" font-size="13" fill="#262626">fx</text></svg>
<div class="t" style="left:1784px;top:409px;">Invert Alpha</div>

<svg style="left:1653px;top:443.5px" width="14" height="12"><path d="M2 3.5l4.5 4.5 4.5-4.5" stroke="#b4b4b4" stroke-width="1.8" fill="none"/></svg>
<div class="t" style="left:1668px;top:437px;">Channel</div>

<svg style="left:1699px;top:468px;will-change:transform" width="20" height="19"><path d="M0 4.5l1.5-4h6l1 2.2h2.5l1-2.2h6l1.5 4V18.5H0z" fill="#b4b4b4"/><text x="1.6" y="16.5" font-family="Liberation Sans" font-size="13.5" fill="#2a2a2a" textLength="16.5" lengthAdjust="spacingAndGlyphs">32</text></svg>
<svg style="left:1728.5px;top:468px" width="20" height="19"><path d="M0 4.5l1.5-4h6l1 2.2h2.5l1-2.2h6l1.5 4V18.5H0z" fill="#b4b4b4"/><path d="M5 8h5M3.5 11.3h5.5M2.2 14.6h5" stroke="#2a2a2a" stroke-width="1.6"/><path d="M12 7l5.5 4.2L12 15.5z" fill="#2a2a2a"/></svg>
<div class="a" style="left:1755px;top:465px;width:60.5px;height:23.5px;background:#a2a2a2;"></div>
<div class="t" style="left:1758.5px;top:465px;color:#1c1c1c;">Invert</div>

<!-- new bin icon -->
<svg style="left:1945.5px;top:497px" width="21" height="20"><path d="M0.5 0.5h20v19H8.2V9.2H0.5z" fill="#b4b4b4"/><path d="M0.5 9.2h7.7v10.3z" fill="#8a8a8a"/></svg>

<div class="t" style="left:1662px;top:538.7px;">Properties</div>
<div class="hl" style="left:1644px;top:572px;width:334px;"></div>
<div class="t" style="left:1662px;top:587.7px;font-size:17.4px;">Character</div>
<div class="hl" style="left:1644px;top:621px;width:334px;"></div>
<div class="t" style="left:1662px;top:636.9px;font-size:17.4px;">Tracker</div>
<div class="hl" style="left:1644px;top:670.1px;width:334px;"></div>
<div class="t" style="left:1662px;top:685.8px;font-size:17.3px;">Brushes</div>
<div class="hl" style="left:1644px;top:719.1px;width:334px;"></div>
<div class="t" style="left:1662px;top:735.3px;font-size:17.7px;">Paint</div>
<div class="hl" style="left:1644px;top:768.5px;width:334px;"></div>
<div class="t" style="left:1662px;top:784.2px;">Info</div>
<div class="hl" style="left:1644px;top:817.5px;width:334px;"></div>
<!--RIGHT-END-->

<!-- ============ TIMELINE PANEL ============ -->
<div class="pn" id="timeline" style="left:2.5px;top:850px;width:1633px;height:381px;"></div>
<!--TL-START-->
<!-- tab -->
<svg style="left:19px;top:869px" width="10" height="10"><path d="M1 1l8 8M9 1L1 9" stroke="#9a9a9a" stroke-width="1.4"/></svg>
<div class="a" style="left:44px;top:863.5px;width:17px;height:16.5px;background:#af9b7c;"></div>
<div class="t" style="left:78px;top:861.5px;color:#d2d2d2;">sitting</div>
<svg style="left:144px;top:868px" width="14" height="13"><path d="M0 1.2h13.5M0 6.3h13.5M0 11.4h13.5" stroke="#b4b4b4" stroke-width="2" fill="none"/></svg>
<!-- timecode -->
<div class="t" style="left:22.5px;top:902px;font-size:23.4px;letter-spacing:0.65px;font-weight:bold;color:#2f9af0;line-height:28px;height:28px;">0:00:00:00</div>
<div class="t" style="left:19.5px;top:928.5px;font-size:16.4px;color:#1f74c4;line-height:22px;height:22px;">00000 (25.00 fps)</div>
<div class="a" style="left:167px;top:909.5px;width:555.5px;height:30px;background:#161616;border-radius:4px;border:1px solid #1f1f1f;"></div>
<svg style="left:176px;top:914px" width="32" height="20"><circle cx="10.5" cy="7.2" r="5.6" fill="none" stroke="#c0c0c0" stroke-width="2"/><path d="M6.5 11.5L1 18" stroke="#c0c0c0" stroke-width="2.2" stroke-linecap="round"/><path d="M19 11.5h9l-4.5 4.5z" fill="#c0c0c0"/></svg>
<!--TL-TOP-ICONS-->
<!-- header row -->
<!--TL-HEADER-ICONS-->
<div class="a" style="left:113px;top:962px;width:1.5px;height:17px;background:#161616;"></div>
<div class="a" style="left:165.5px;top:962px;width:1.5px;height:17px;background:#161616;"></div>
<div class="a" style="left:219.5px;top:962px;width:1.5px;height:17px;background:#161616;"></div>
<div class="a" style="left:555px;top:962px;width:1.5px;height:17px;background:#161616;"></div>
<div class="a" style="left:780px;top:962px;width:1.5px;height:17px;background:#161616;"></div>
<div class="a" style="left:972px;top:962px;width:1.5px;height:17px;background:#161616;"></div>
<div class="t" style="left:175px;top:959px;font-size:14px;color:#9a9a9a;">#</div>
<div class="t" style="left:229px;top:958.7px;font-size:14.6px;color:#a4a4a4;">Source Name</div>
<div class="t" style="left:789.5px;top:958.7px;font-size:15.1px;color:#a4a4a4;">Parent &amp; Link</div>

<!-- row 1 -->
<div class="a" style="left:3.5px;top:986px;width:994px;height:26px;background:#494949;"></div>
<div class="a" style="left:10px;top:988.5px;width:21px;height:21px;background:#3a3a3a;"></div>
<div class="a" style="left:59px;top:988.5px;width:21px;height:21px;background:#3a3a3a;"></div>
<div class="a" style="left:83.5px;top:988.5px;width:21px;height:21px;background:#3a3a3a;"></div>
<svg style="left:123px;top:992px" width="9" height="15"><path d="M1.5 1.5l5.5 6-5.5 6" stroke="#c0c0c0" stroke-width="1.8" fill="none"/></svg>
<div class="a" style="left:142px;top:990px;width:20px;height:18.7px;background:#b1aed5;"></div>
<div class="t" style="left:177px;top:987px;font-weight:bold;color:#c8c8c8;font-size:17.5px;">1</div>
<div class="a" style="left:225px;top:988px;width:22px;height:22px;background:#fff;border:1.5px solid #0a0a0a;border-radius:2px;"></div>
<div class="a" style="left:250.8px;top:986px;width:305px;height:26px;background:#a3a3a3;"></div>
<div class="t" style="left:255.5px;top:987px;font-weight:bold;color:#1c1c1c;font-size:17.4px;">Adjustment Layer 1</div>
<div class="a" style="left:563.7px;top:988.5px;width:21.3px;height:21px;background:#3a3a3a;"></div>
<div class="a" style="left:588.4px;top:988.5px;width:21px;height:21px;background:#3a3a3a;"></div>
<div class="a" style="left:613px;top:988.5px;width:21px;height:21px;background:#3a3a3a;"></div>
<div class="a" style="left:637.5px;top:988.5px;width:21px;height:21px;background:#3a3a3a;"></div>
<div class="a" style="left:686.3px;top:988.5px;width:21px;height:21px;background:#3a3a3a;"></div>
<div class="a" style="left:711px;top:988.5px;width:21px;height:21px;background:#3a3a3a;"></div>
<div class="a" style="left:735.6px;top:988.5px;width:21px;height:21px;background:#3a3a3a;"></div>
<div class="a" style="left:818.7px;top:988.5px;width:146.5px;height:22px;background:#1f1f1f;"></div>
<div class="t" style="left:829.5px;top:987.5px;color:#d2d2d2;font-size:17.5px;">None</div>
<svg style="left:944px;top:994px" width="14" height="10"><path d="M1 2l5.8 5.5L12.6 2" stroke="#c8c8c8" stroke-width="1.8" fill="none"/></svg>

<!-- row 2 -->
<div class="a" style="left:3.5px;top:1014.3px;width:994px;height:24.7px;background:#2b2b2b;"></div>
<div class="a" style="left:10px;top:1016.5px;width:21px;height:21px;background:#1f1f1f;"></div>
<div class="a" style="left:59px;top:1016.5px;width:21px;height:21px;background:#1f1f1f;"></div>
<div class="a" style="left:83.5px;top:1016.5px;width:21px;height:21px;background:#1f1f1f;"></div>
<svg style="left:123px;top:1020px" width="9" height="15"><path d="M1.5 1.5l5.5 6-5.5 6" stroke="#c0c0c0" stroke-width="1.8" fill="none"/></svg>
<div class="a" style="left:142px;top:1017.7px;width:20px;height:19px;background:#a9cfc9;"></div>
<div class="t" style="left:177px;top:1015px;font-weight:bold;color:#c8c8c8;font-size:17.5px;">2</div>
<div class="t" style="left:255.5px;top:1015px;font-weight:bold;color:#c8c8c8;font-size:17.4px;">sitting.mp4</div>
<div class="a" style="left:563.7px;top:1016.5px;width:21.3px;height:21px;background:#1f1f1f;"></div>
<div class="a" style="left:613px;top:1016.5px;width:21px;height:21px;background:#1f1f1f;"></div>
<div class="a" style="left:661.8px;top:1016.5px;width:21px;height:21px;background:#1f1f1f;"></div>
<div class="a" style="left:686.3px;top:1016.5px;width:21px;height:21px;background:#1f1f1f;"></div>
<div class="a" style="left:711px;top:1016.5px;width:21px;height:21px;background:#1f1f1f;"></div>
<div class="a" style="left:735.6px;top:1016.5px;width:21px;height:21px;background:#1f1f1f;"></div>
<div class="a" style="left:818.7px;top:1016.5px;width:146.5px;height:22px;background:#1f1f1f;"></div>
<div class="t" style="left:829.5px;top:1015.5px;color:#d2d2d2;font-size:17.5px;">None</div>
<svg style="left:944px;top:1022px" width="14" height="10"><path d="M1 2l5.8 5.5L12.6 2" stroke="#c8c8c8" stroke-width="1.8" fill="none"/></svg>
<!--TLI-START-->
<svg style="left:0;top:0;will-change:transform" width="1999" height="1234" viewBox="0 0 1999 1234">
<defs>
 <g id="eye"><path d="M-8.6 0C-6 -4 -3 -5.4 0 -5.4S6 -4 8.6 0C6 4 3 5.4 0 5.4S-6 4 -8.6 0z" fill="#c6c6c6"/><circle cx="0" cy="-0.3" r="3.5" fill="#2a2a2a"/><circle cx="1.3" cy="-1.6" r="1" fill="#c6c6c6"/></g>
 <g id="shy"><path d="M-7.4 1.2A7.4 9.6 0 0 1 7.4 1.2H2V6.6H-2V1.2z" fill="#c6c6c6"/><path d="M-10 3.8h6.4M3.6 3.8H10" stroke="#c6c6c6" stroke-width="1.5"/></g>
 <g id="slash"><path d="M-7.5 7.5L7.5 -7.5" stroke="#c6c6c6" stroke-width="1.9" stroke-linecap="round"/></g>
 <g id="half"><circle r="7.6" fill="none" stroke="#c6c6c6" stroke-width="1.5"/><path d="M5.6 -5.6A7.9 7.9 0 0 1 -5.6 5.6z" fill="#c6c6c6"/></g>
 <g id="spiral"><path d="M0.5 1.2a2 2 0 1 1 2.6-2.5a4.3 4.3 0 0 1-3.2 6.1a6.2 6.2 0 0 1-6.5-4.4a8 8 0 0 1 4-8.6" fill="none" stroke="#b4b4b4" stroke-width="1.4" stroke-linecap="round"/><path d="M-2.6 -8.2a8.2 8.2 0 0 1 10.6 8.8a8 8 0 0 1-6.5 7.2" fill="none" stroke="#b4b4b4" stroke-width="1.4" stroke-linecap="round"/></g>
</defs>
<!-- header icons -->
<use href="#eye" x="20.8" y="970.6"/>
<use href="#eye" x="20.8" y="998.6"/>
<use href="#eye" x="20.8" y="1026.5"/>
<!-- speaker -->
<path d="M36.3 966.3h4.2l5.6-5v19l-5.6-5h-4.2z" fill="#c6c6c6"/>
<path d="M48 965.5a6.5 6.5 0 0 1 0 10.4M49.5 961.5a11 11 0 0 1 0 18.4" fill="none" stroke="#c6c6c6" stroke-width="1.7"/>
<circle cx="69.3" cy="970.9" r="5.9" fill="#c6c6c6"/>
<!-- lock -->
<path d="M89.8 969.5v-2.8a4.5 4.8 0 0 1 9 0v2.8" fill="none" stroke="#c6c6c6" stroke-width="2"/>
<rect x="87" y="968.7" width="14.6" height="9.6" rx="0.8" fill="#c6c6c6"/><circle cx="94.3" cy="972.4" r="1.7" fill="#262626"/><rect x="93.5" y="972.6" width="1.6" height="3.6" fill="#262626"/>
<!-- tag -->
<path d="M136.5 961.2h8.2l11.3 11.2-8.6 8.4-10.9-10.9z" fill="#c6c6c6"/><circle cx="140.6" cy="965.2" r="1.8" fill="#262626"/>
<!-- switches header -->
<use href="#shy" x="574.3" y="970.4"/>
<circle cx="571" cy="968.4" r="1.75" fill="#262626"/><circle cx="577.6" cy="968.4" r="1.75" fill="#262626"/>
<g stroke="#c6c6c6" stroke-width="1.5" fill="none"><circle cx="598.8" cy="970.7" r="3.1"/><path d="M598.8 962.5v3.6M598.8 975.3v3.6M590.6 970.7h3.6M603.4 970.7h3.6M593 964.9l2.6 2.6M602 973.9l2.6 2.6M593 976.5l2.6-2.6M602 967.5l2.6-2.6"/></g>
<g fill="#c6c6c6"><rect x="614.6" y="962.2" width="2.9" height="2.9"/><rect x="617.2" y="964.8" width="2.9" height="2.9"/><rect x="619.8" y="967.4" width="2.9" height="2.9"/><rect x="622.4" y="970" width="2.9" height="2.9"/><rect x="625" y="972.6" width="2.9" height="2.9"/><rect x="627.6" y="975.2" width="2.9" height="2.9"/></g>
<text x="638.6" y="976.5" font-family="Liberation Serif" font-style="italic" font-size="23" fill="#c6c6c6" textLength="17.5" lengthAdjust="spacingAndGlyphs">fx</text>
<!-- frame blend header -->
<g><rect x="665.2" y="961.8" width="16.4" height="14" fill="#c6c6c6"/><path d="M662.8 964v15h15.4" fill="none" stroke="#c6c6c6" stroke-width="1.4"/><g fill="#262626"><rect x="666.4" y="963.3" width="1.5" height="1.6"/><rect x="666.4" y="966.5" width="1.5" height="1.6"/><rect x="666.4" y="969.7" width="1.5" height="1.6"/><rect x="666.4" y="972.9" width="1.5" height="1.6"/><rect x="678.9" y="963.3" width="1.5" height="1.6"/><rect x="678.9" y="966.5" width="1.5" height="1.6"/><rect x="678.9" y="969.7" width="1.5" height="1.6"/><rect x="678.9" y="972.9" width="1.5" height="1.6"/><rect x="670.4" y="968" width="6" height="1.6"/></g></g>
<!-- motion blur header -->
<g fill="#262626" stroke="#c6c6c6" stroke-width="1.3"><circle cx="693.5" cy="974.5" r="6.3"/><circle cx="696.8" cy="971.5" r="6.3"/><circle cx="700.8" cy="967.6" r="6.6" fill="#6c6c6c"/></g>
<use href="#half" x="721.5" y="970.7"/>
<!-- cube -->
<g fill="none" stroke="#c6c6c6" stroke-width="1.5" stroke-linejoin="round"><path d="M746.4 964l6.6 3.2v7.3l-6.6 3.4-6.6-3.4v-7.3z"/><path d="M739.8 967.2l6.6 3.3 6.6-3.3M746.4 970.5v7.4"/></g>

<!-- row 1 switch icons -->
<use href="#shy" x="574.3" y="998.6"/><circle cx="571" cy="996.6" r="1.75" fill="#3a3a3a"/><circle cx="577.6" cy="996.6" r="1.75" fill="#3a3a3a"/>
<use href="#slash" x="623.5" y="998.5"/>
<text x="638.6" y="1004.5" font-family="Liberation Serif" font-style="italic" font-size="23" fill="#c6c6c6" textLength="17.5" lengthAdjust="spacingAndGlyphs">fx</text>
<use href="#half" x="721.5" y="998.6"/>
<use href="#spiral" x="798" y="998"/>
<!-- row 2 switch icons -->
<use href="#shy" x="574.3" y="1026.6"/><circle cx="571" cy="1024.6" r="1.75" fill="#1f1f1f"/><circle cx="577.6" cy="1024.6" r="1.75" fill="#1f1f1f"/>
<use href="#slash" x="623.5" y="1026.5"/>
<use href="#spiral" x="798" y="1026"/>
<!-- file icon row2 -->
<path d="M227.6 1017.3h11.2l5.4 5.2v15h-16.6z" fill="#f2f2f2"/><path d="M238.8 1017.3v5.2h5.4z" fill="#bdbdbd"/>
<rect x="230.4" y="1022.8" width="11" height="10.6" rx="2" fill="#1d2733"/><circle cx="235.9" cy="1027.8" r="3.3" fill="none" stroke="#2f9af0" stroke-width="1.7"/><circle cx="235.9" cy="1027.8" r="1.2" fill="#9fd2ff"/>

<!-- top-right timeline icons -->
<g fill="#bdbdbd" stroke="none"><rect x="751.8" y="916" width="7" height="4.7" rx="1"/><rect x="748.5" y="917.6" width="4" height="1.5"/><rect x="766.8" y="915.6" width="6.4" height="5.1" rx="0.8"/><rect x="766.8" y="924.4" width="6.4" height="4.7" rx="0.8"/><path d="M769.4 931.5h7.5l-3.75 4.5z"/></g>
<path d="M758.8 918.3h8M762.3 918.3v8.5h4.5" fill="none" stroke="#bdbdbd" stroke-width="1.4"/>
<!-- shy big -->
<rect x="804.1" y="925.6" width="26.8" height="8.2" fill="#6c6c6c"/>
<path d="M806.5 923.6v-2.8l1.5 1.2 1.4-.8A8.4 8.6 0 0 1 825.6 921.2l1.4.8 1.5-1.2v2.8H820v5.6a2.5 2.5 0 0 1-5 0v-5.6z" fill="#c0c0c0"/>
<circle cx="814.3" cy="919.5" r="2.1" fill="#262626"/><circle cx="820.7" cy="919.5" r="2.1" fill="#262626"/>
<!-- frame blend big -->
<g><rect x="849.2" y="918" width="15.6" height="17" fill="none" stroke="#bdbdbd" stroke-width="1.4"/><rect x="856" y="912.5" width="15.9" height="18" fill="#bdbdbd"/><rect x="855" y="911.8" width="17.6" height="19.5" fill="none" stroke="#262626" stroke-width="1"/><rect x="856" y="912.5" width="15.9" height="18" fill="#bdbdbd"/>
<g fill="#262626"><rect x="857.2" y="914" width="1.6" height="1.8"/><rect x="857.2" y="917.6" width="1.6" height="1.8"/><rect x="857.2" y="921.2" width="1.6" height="1.8"/><rect x="857.2" y="924.8" width="1.6" height="1.8"/><rect x="857.2" y="928" width="1.6" height="1.5"/><rect x="869" y="914" width="1.6" height="1.8"/><rect x="869" y="917.6" width="1.6" height="1.8"/><rect x="869" y="921.2" width="1.6" height="1.8"/><rect x="869" y="924.8" width="1.6" height="1.8"/><rect x="869" y="928" width="1.6" height="1.5"/><rect x="860.5" y="920.6" width="6.8" height="1.7"/></g>
<g fill="#bdbdbd"><rect x="850.8" y="920" width="1.5" height="1.6"/><rect x="850.8" y="923.4" width="1.5" height="1.6"/><rect x="850.8" y="926.8" width="1.5" height="1.6"/><rect x="850.8" y="930.2" width="1.5" height="1.6"/><rect x="851" y="932.2" width="12" height="1.6"/></g></g>
<!-- motion blur big -->
<g fill="#262626" stroke="#bdbdbd" stroke-width="1.5"><circle cx="899.3" cy="927.6" r="7.4"/><circle cx="902.4" cy="924.6" r="7.4"/><circle cx="906.2" cy="920.6" r="7.8" fill="#6c6c6c"/></g>
<!-- graph editor -->
<g fill="none" stroke="#bdbdbd"><rect x="947.4" y="915.2" width="23.6" height="20" stroke-width="1.6"/><path d="M945 918.8h2.4M945 925.5h2.4M945 932.2h2.4M950.5 913.6v1.6M955.5 911v4.2M960.7 913.6v1.6M965.7 911v4.2" stroke-width="1.4"/><path d="M950.5 920c6 0 5.5 10 12 10.4l4.8 0" stroke-width="1.5"/></g>

<!-- status icons -->
<rect x="10.5" y="1205.5" width="26" height="24.5" fill="#1f1f1f" stroke="#303030" stroke-width="1"/>
<g fill="#1f1f1f" stroke="#2d8ceb" stroke-width="1.5"><rect x="15" y="1209.5" width="10.5" height="10.5" rx="1"/><rect x="18.5" y="1212.6" width="10.5" height="10.5" rx="1"/><rect x="22" y="1215.8" width="10.5" height="10.5" rx="1"/></g><circle cx="27.2" cy="1221.2" r="1.7" fill="#2d8ceb"/>
<g fill="none" stroke="#bdbdbd" stroke-width="1.6"><circle cx="52.6" cy="1215.3" r="6.3"/><rect x="54" y="1216.2" width="9.6" height="9.4"/></g>
<g><rect x="82.6" y="1209" width="6.8" height="17" fill="#7a7a7a"/><path d="M85.5 1208.8q-3 0-3 2.800v3.200q0 2.600-4.300 2.600q4.300 0 4.300 2.600v3.200q0 2.800 3 2.800M86.500 1208.800q3 0 3 2.800v3.200q0 2.600 4.300 2.600q-4.300 0-4.300 2.600v3.200q0 2.800-3 2.800" fill="none" stroke="#bdbdbd" stroke-width="1.8"/></g>
<g fill="#bdbdbd"><path d="M107.800 1221.500a7 7.200 0 1 1 12.400 0z"/><rect x="106.600" y="1222.600" width="19.500" height="1.800"/></g><path d="M120.500 1221.500l1.800-7.500M122 1221.500l4-7" stroke="#bdbdbd" stroke-width="1.300" fill="none"/><circle cx="122.400" cy="1213.300" r="1.400" fill="#bdbdbd"/><circle cx="126.300" cy="1213.600" r="1.400" fill="#bdbdbd"/>
</svg>
<!--TLI-END-->

<!-- vertical divider -->
<div class="a" style="left:997.5px;top:905px;width:2px;height:298px;background:#141414;"></div>

<!-- time area -->
<div class="a" style="left:999.5px;top:980px;width:605.5px;height:222px;background:#2b2b2b;"></div>
<div class="a" style="left:999.5px;top:1040.5px;width:594.5px;height:162px;background:#353535;"></div>
<div class="a" style="left:999.5px;top:986.5px;width:605.5px;height:26px;background:#494949;"></div>
<!-- navigator -->
<div class="a" style="left:999.5px;top:904.5px;width:606px;height:16px;background:#0e0e0e;border-radius:8px;"></div>
<div class="a" style="left:1000.5px;top:906px;width:604px;height:13px;background:#676767;border-radius:7px;"></div>
<div class="a" style="left:1000.5px;top:906px;width:9px;height:13px;background:#2d8ceb;border-radius:7px 0 0 7px;"></div>
<div class="a" style="left:1595.5px;top:906px;width:9px;height:13px;background:#2d8ceb;border-radius:0 7px 7px 0;"></div>
<div class="a" style="left:1010.6px;top:906px;width:1.6px;height:13px;background:#2d8ceb;"></div>
<!-- ruler -->
<div class="a" style="left:999.5px;top:921.5px;width:60px;height:24px;overflow:hidden;"><div class="t" style="left:-4px;top:0;font-size:16px;color:#9e9e9e;">0:00s</div></div>
<div class="t" style="left:1097px;top:921.5px;font-size:16px;color:#9e9e9e;">02s</div>
<div class="t" style="left:1195.5px;top:921.5px;font-size:16px;color:#9e9e9e;">04s</div>
<div class="t" style="left:1294px;top:921.5px;font-size:16px;color:#9e9e9e;">06s</div>
<div class="t" style="left:1393px;top:921.5px;font-size:16px;color:#9e9e9e;">08s</div>
<div class="t" style="left:1491.5px;top:921.5px;font-size:16px;color:#9e9e9e;">10s</div>
<div class="t" style="left:1589px;top:921.5px;font-size:16px;color:#9e9e9e;width:17px;overflow:hidden;">12s</div>
<div class="a" style="left:1109.3px;top:944px;width:1.6px;height:8px;background:#9e9e9e;"></div>
<div class="a" style="left:1208px;top:944px;width:1.6px;height:8px;background:#9e9e9e;"></div>
<div class="a" style="left:1306.6px;top:944px;width:1.6px;height:8px;background:#9e9e9e;"></div>
<div class="a" style="left:1405.2px;top:944px;width:1.6px;height:8px;background:#9e9e9e;"></div>
<div class="a" style="left:1503.8px;top:944px;width:1.6px;height:8px;background:#9e9e9e;"></div>
<div class="a" style="left:1602.4px;top:944px;width:1.6px;height:8px;background:#9e9e9e;"></div>
<!-- work area -->
<div class="a" style="left:999.5px;top:952px;width:606px;height:28px;background:#0a0a0a;"></div>
<div class="a" style="left:1000.5px;top:953.8px;width:604px;height:24.7px;background:linear-gradient(#6c6c6c 0,#606060 2px,#606060 100%);"></div>
<div class="a" style="left:1001px;top:954.3px;width:9px;height:23.7px;background:#2d8ceb;border-radius:5px 0 0 5px;"></div>
<div class="a" style="left:1595.5px;top:954.3px;width:9px;height:23.7px;background:#2d8ceb;border-radius:0 5px 5px 0;"></div>
<!-- layer bars -->
<div class="a" style="left:1012.3px;top:987px;width:581.7px;height:25.5px;background:linear-gradient(#c2c0dc 0,#a6a4c8 2.5px,#9c9ac0 12px,#8c8ab2 23px,#7c7aa2 100%);"></div>
<svg style="left:1012.3px;top:987px" width="581.7" height="25.5"><filter id="nz" x="0" y="0" width="100%" height="100%"><feTurbulence type="fractalNoise" baseFrequency="0.85" numOctaves="2" seed="7" result="t"/><feColorMatrix in="t" type="matrix" values="0 0 0 0 0.30  0 0 0 0 0.30  0 0 0 0 0.45  1.6 0 0 0 -0.62"/></filter><rect width="581.7" height="25.5" filter="url(#nz)" opacity="0.55"/><filter id="nz2" x="0" y="0" width="100%" height="100%"><feTurbulence type="fractalNoise" baseFrequency="0.8" numOctaves="2" seed="21" result="t"/><feColorMatrix in="t" type="matrix" values="0 0 0 0 0.85  0 0 0 0 0.85  0 0 0 0 0.95  0 1.6 0 0 -0.66"/></filter><rect width="581.7" height="25.5" filter="url(#nz2)" opacity="0.4"/></svg>
<div class="a" style="left:1024.5px;top:988px;width:26.5px;height:24.5px;border:1.5px solid #7c98cc;box-shadow:inset 0 0 0 1px rgba(60,60,90,.35);"></div>
<div class="a" style="left:1083.3px;top:988px;width:61px;height:24.5px;border:1.5px solid #7c98cc;box-shadow:inset 0 0 0 1px rgba(60,60,90,.35);"></div>
<div class="a" style="left:1012.3px;top:1015px;width:581.7px;height:25.5px;background:linear-gradient(#788984 0,#73847f 50%,#6f7f7a 100%);border-radius:9px 9px 0 0;"></div>
<svg style="left:1012.3px;top:1015px" width="582" height="10"><path d="M0 0h9A9 9 0 0 0 0 9z" fill="#3c4a46"/><path d="M581.7 0h-9a9 9 0 0 1 9 9z" fill="#3c4a46"/></svg>
<!-- playhead -->
<div class="a" style="left:1010.6px;top:944px;width:2px;height:258px;background:#2d8ceb;"></div>
<svg style="left:1001.5px;top:929.5px" width="21" height="22"><path d="M0 0h20.4v10L10.2 21 0 10z" fill="#2d8ceb"/><path d="M6.5 10.5h7.4" stroke="#1a1a1a" stroke-width="1.6"/><path d="M10.2 10.5V21" stroke="#1a1a1a" stroke-width="0"/></svg>
<!-- right icons -->
<svg style="left:1612px;top:956.5px" width="19" height="23"><path d="M0.5 0.5h17.5v13.5l-8.7 8.5L0.5 14z" fill="#bdbdbd"/></svg>
<svg style="left:1607px;top:989px" width="26" height="22"><path d="M2 12.5L13 2.5v4h11v9.5H13" fill="none" stroke="#bdbdbd" stroke-width="2"/><path d="M14 7h9.5v8.5H14z" fill="#bdbdbd"/><circle cx="11" cy="15.5" r="4.6" fill="#262626" stroke="#bdbdbd" stroke-width="2"/></svg>

<!-- status bar -->
<div class="a" style="left:1174.5px;top:1202px;width:432.5px;height:29px;background:#222222;"></div>
<div class="a" style="left:3px;top:1202.2px;width:1632.5px;height:1.6px;background:#0c0c0c;"></div>
<!--TL-STATUS-ICONS-->
<div class="t" style="left:174px;top:1205px;font-size:17.6px;color:#a2a2a2;">Frame Render Time</div>
<div class="t" style="left:339.5px;top:1205px;font-size:17.6px;font-weight:bold;color:#e2b761;">161ms</div>
<div class="a" style="left:559px;top:1205.8px;width:218.5px;height:23.5px;background:#1f1f1f;border:1px solid #303030;border-radius:2px;"></div>
<div class="t" style="left:569.5px;top:1205px;font-size:17.85px;color:#b4b4b4;">Toggle Switches / Modes</div>
<svg style="left:1005px;top:1208px" width="170" height="18"><path d="M2 12.5l9-7 9 7z" fill="#bdbdbd"/><path d="M45 10.5h72" stroke="#4a4a4a" stroke-width="2"/><circle cx="45" cy="10.5" r="5.2" fill="#262626" stroke="#c8c8c8" stroke-width="2.2"/><path d="M135 14l8.5-9 5 5 3.5-3.5 9 7.5z" fill="#bdbdbd"/></svg>
<!-- bottom-left corner -->
<svg style="left:0;top:1220px" width="14" height="14"><path d="M0 0v14h14A14 14 0 0 1 0 0z" fill="#0b0e14"/></svg>
<!--TL-END-->

<!-- ============ GREEN ARROW ============ -->
<!--AR-START-->
<svg style="left:0;top:0" width="1999" height="1234" viewBox="0 0 1999 1234"><path d="M1676.500 477.500L1148 976.300" stroke="#00f900" stroke-width="5.200" stroke-linecap="round" fill="none"/><path d="M1119.800 1002.900L1143.700 968.500L1155.500 981z" fill="#00f900"/></svg>
<!--AR-END-->

</body>
</html>
